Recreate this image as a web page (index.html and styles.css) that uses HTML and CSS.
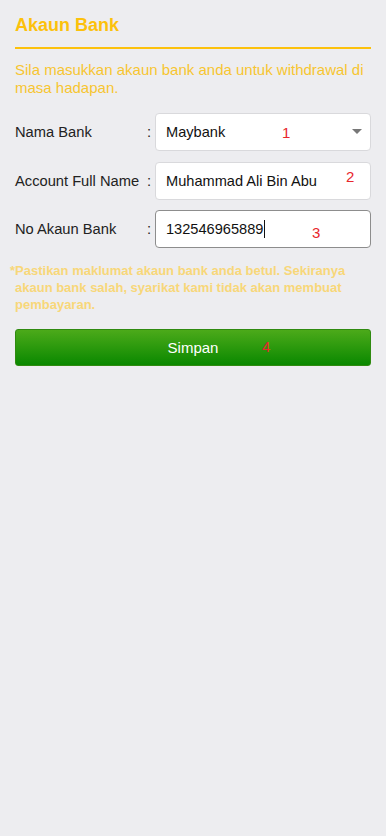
FILE: index.html
```html
<!DOCTYPE html>
<html lang="ms">
<head>
<meta charset="utf-8">
<title>Akaun Bank</title>
<link rel="stylesheet" href="styles.css">
</head>
<body>
<div class="page">
  <h1 class="title">Akaun Bank</h1>
  <p class="intro">Sila masukkan akaun bank anda untuk withdrawal di masa hadapan.</p>

  <div class="form">
    <div class="row">
      <span class="label">Nama Bank</span>
      <span class="colon">:</span>
      <div class="field select">
        <span class="value">Maybank</span>
        <svg class="arrow" width="10" height="5" viewBox="0 0 10 5"><path d="M0 0H10L5 5Z" fill="#777"/></svg>
        <span class="mark mark1">1</span>
      </div>
    </div>
    <div class="row">
      <span class="label">Account Full Name</span>
      <span class="colon">:</span>
      <div class="field">
        <span class="value">Muhammad Ali Bin Abu</span>
        <span class="mark mark2">2</span>
      </div>
    </div>
    <div class="row">
      <span class="label">No Akaun Bank</span>
      <span class="colon">:</span>
      <div class="field focus">
        <span class="value">132546965889</span><span class="caret"></span>
        <span class="mark mark3">3</span>
      </div>
    </div>
  </div>

  <p class="note">*Pastikan maklumat akaun bank anda betul. Sekiranya akaun bank salah, syarikat kami tidak akan membuat pembayaran.</p>

  <button class="save" type="button">Simpan<span class="mark mark4">4</span></button>
</div>
</body>
</html>
```
FILE: styles.css
```css
html, body {
  margin: 0;
  padding: 0;
}
body {
  background: #ededf0;
  font-family: Arial, "Liberation Sans", sans-serif;
  min-height: 836px;
}
.page {
  padding: 14px 15px 0 15px;
}
.title {
  margin: 0;
  font-size: 18px;
  line-height: 22px;
  font-weight: bold;
  color: #fcc10c;
  padding-bottom: 11px;
  border-bottom: 2px solid #fcc10c;
}
.intro {
  margin: 12px 0 0 0;
  font-size: 15px;
  line-height: 18px;
  color: #f7c530;
}
.form {
  margin-top: 16px;
}
.row {
  display: flex;
  align-items: center;
  margin-bottom: 10.5px;
}
.label {
  width: 132px;
  font-size: 14.7px;
  color: #222;
  white-space: nowrap;
}
.colon {
  width: 8px;
  font-size: 14.7px;
  color: #222;
}
.field {
  position: relative;
  flex: 1;
  height: 38px;
  box-sizing: border-box;
  background: #fff;
  border: 1px solid #d9d9dc;
  border-radius: 4px;
  display: flex;
  align-items: center;
  padding: 0 10px;
  font-size: 14.6px;
  color: #111;
}
.field.focus {
  border-color: #8d8d8d;
}
.caret {
  display: inline-block;
  width: 1px;
  height: 18px;
  background: #111;
  margin-left: 1px;
}
.arrow {
  position: absolute;
  right: 8px;
  top: 15px;
}
.mark {
  position: absolute;
  color: #e8262c;
  font-size: 15px;
  line-height: 18px;
}
.mark1 { left: 126px; top: 10px; }
.mark2 { left: 190px; top: 5px; }
.mark3 { left: 156px; top: 13px; }
.note {
  margin: 14px 0 0 0;
  padding-left: 0;
  text-indent: -5px;
  font-size: 13px;
  line-height: 17px;
  font-weight: bold;
  color: #f8d779;
}
.save {
  position: relative;
  display: block;
  width: 100%;
  height: 37px;
  margin-top: 16px;
  border: 1px solid #2f8a10;
  border-radius: 3px;
  background: linear-gradient(#4caa1a, #0a8800);
  color: #fff;
  font-family: Arial, "Liberation Sans", sans-serif;
  font-size: 15px;
  padding: 0;
}
.mark4 { left: 246px; top: 8px; }
```
